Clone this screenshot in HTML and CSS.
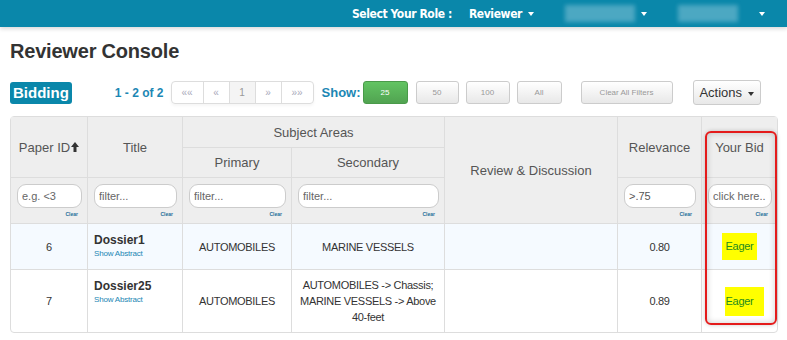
FILE: index.html
```html
<!DOCTYPE html>
<html lang="en">
<head>
    <meta charset="UTF-8">
    <title>Reviewer Console</title>
    <link rel="stylesheet" href="styles.css">
</head>
<body>
    <div class="topbar">
        <span class="role-label">Select Your Role :</span>
        <span class="nav-item role">Reviewer <span class="caret"></span></span>
        <span class="nav-item"><span class="blurred wide"></span><span class="caret"></span></span>
        <span class="nav-item"><span class="blurred"></span><span class="caret"></span></span>
    </div>

    <h1 class="page-title">Reviewer Console</h1>

    <div class="toolbar">
        <span class="badge">Bidding</span>
        <span class="count">1 - 2 of 2</span>
        <div class="pager">
            <span class="pg first">&laquo;&laquo;</span>
            <span class="pg">&laquo;</span>
            <span class="pg active">1</span>
            <span class="pg">&raquo;</span>
            <span class="pg first">&raquo;&raquo;</span>
        </div>
        <span class="show-label">Show:</span>
        <button class="btn green s25">25</button>
        <button class="btn s50">50</button>
        <button class="btn s100">100</button>
        <button class="btn sall">All</button>
        <button class="btn clear-all">Clear All Filters</button>
        <button class="btn actions">Actions <span class="caret dark"></span></button>
    </div>

    <div class="grid-wrap">
        <table class="grid">
            <colgroup>
                <col style="width:77px">
                <col style="width:95px">
                <col style="width:109px">
                <col style="width:153px">
                <col style="width:173px">
                <col style="width:84px">
                <col style="width:75px">
            </colgroup>
            <thead>
                <tr class="h1">
                    <th rowspan="2">Paper ID<svg class="sort" width="8" height="10" viewBox="0 0 8 10"><path d="M4 0 L8 5 H5.5 V10 H2.5 V5 H0 Z"/></svg></th>
                    <th rowspan="2">Title</th>
                    <th colspan="2">Subject Areas</th>
                    <th rowspan="3" class="review">Review &amp; Discussion</th>
                    <th rowspan="2">Relevance</th>
                    <th rowspan="2" class="last">Your Bid</th>
                </tr>
                <tr class="h2">
                    <th>Primary</th>
                    <th>Secondary</th>
                </tr>
                <tr class="filters">
                    <td><input class="filter" placeholder="e.g. <3"><div class="clear">Clear</div></td>
                    <td><input class="filter" placeholder="filter..."><div class="clear">Clear</div></td>
                    <td><input class="filter" placeholder="filter..."><div class="clear">Clear</div></td>
                    <td><input class="filter" placeholder="filter..."><div class="clear">Clear</div></td>
                    <td><input class="filter" value=">.75"><div class="clear">Clear</div></td>
                    <td class="last"><input class="filter" placeholder="click here.."><div class="clear">Clear</div></td>
                </tr>
            </thead>
            <tbody>
                <tr class="row odd">
                    <td>6</td>
                    <td class="title-cell"><div class="paper">Dossier1</div><a class="abstract">Show Abstract</a></td>
                    <td>AUTOMOBILES</td>
                    <td>MARINE VESSELS</td>
                    <td></td>
                    <td>0.80</td>
                    <td class="last"><span class="bid">Eager</span></td>
                </tr>
                <tr class="row tall">
                    <td>7</td>
                    <td class="title-cell"><div class="paper">Dossier25</div><a class="abstract">Show Abstract</a></td>
                    <td>AUTOMOBILES</td>
                    <td>AUTOMOBILES -&gt; Chassis; MARINE VESSELS -&gt; Above 40-feet</td>
                    <td></td>
                    <td>0.89</td>
                    <td class="last"><span class="bid big">Eager</span></td>
                </tr>
            </tbody>
        </table>
        <div class="bid-highlight"></div>
    </div>
</body>
</html>
```

FILE: styles.css
```css
body {
    margin: 0;
    font-family: 'Liberation Sans', Arial, sans-serif;
    color: #333;
    background: #fff;
}
.topbar {
    height: 27px;
    background: #0a87aa;
    box-shadow: 0 2px 4px rgba(0,0,0,0.15);
    display: flex;
    align-items: center;
    justify-content: flex-end;
    padding-right: 22px;
    color: #fff;
    font-family: 'DejaVu Sans Condensed', sans-serif;
    font-size: 12px;
    font-weight: bold;
    letter-spacing: -0.4px;
}
.nav-item {
    display: flex;
    align-items: center;
}
.role {
    margin-left: 17px;
    gap: 6px;
}
.nav-item + .nav-item {
    margin-left: 31px;
}
.blurred {
    display: inline-block;
    width: 60px;
    height: 17px;
    background: rgba(200,230,240,0.35);
    filter: blur(2px);
    margin-right: 21px;
}
.blurred.wide {
    width: 70px;
    margin-right: 6px;
}
.caret {
    display: inline-block;
    width: 0;
    height: 0;
    border-top: 4px solid #fff;
    border-left: 3px solid transparent;
    border-right: 3px solid transparent;
}
.caret.dark {
    border-top-color: #333;
    margin-left: 2px;
    vertical-align: middle;
}
.page-title {
    margin: 12px 0 0 10px;
    font-size: 20px;
    line-height: 24px;
    font-weight: bold;
    letter-spacing: -0.2px;
    color: #333;
}
.toolbar {
    display: flex;
    align-items: center;
    height: 25px;
    margin-top: 17px;
    padding-left: 10px;
}
.badge {
    background: #0a87aa;
    color: #fff;
    font-weight: bold;
    font-size: 15px;
    line-height: 22px;
    padding: 0 3px;
    border-radius: 3px;
}
.count, .show-label {
    color: #1c87b4;
    font-weight: bold;
    font-size: 12px;
}
.count {
    margin-left: 43px;
}
.pager {
    display: flex;
    margin-left: 7px;
    border: 1px solid #ddd;
    border-radius: 4px;
    overflow: hidden;
    height: 21px;
    box-shadow: 0 2px 3px rgba(0,0,0,0.04);
}
.pg {
    width: 25px;
    font-size: 10px;
    line-height: 21px;
    text-align: center;
    color: #aab;
    border-left: 1px solid #ddd;
}
.pg:first-child {
    border-left: none;
}
.pg.first {
    width: 31px;
}
.pg.active {
    background: #f4f4f4;
    color: #999;
}
.show-label {
    margin-left: 8px;
    font-size: 13px;
}
.btn {
    height: 23px;
    border: 1px solid #ccc;
    border-radius: 3px;
    background: linear-gradient(#fff, #e8e8e8);
    color: #999;
    font-family: 'Liberation Sans', Arial, sans-serif;
    font-size: 8px;
    padding: 0;
}
.btn.green {
    background: linear-gradient(#62c462, #51a351);
    border-color: #4a9a4a;
    color: #fff;
}
.s25 { width: 45px; margin-left: 2px; }
.s50 { width: 43px; margin-left: 8px; }
.s100 { width: 44px; margin-left: 7px; }
.sall { width: 45px; margin-left: 7px; }
.clear-all { width: 92px; margin-left: 19px; }
.actions {
    width: 68px;
    height: 25px;
    margin-left: 20px;
    font-size: 13px;
    color: #333;
}
.grid-wrap {
    position: relative;
    margin: 11px 9px 0 10px;
    border: 1px solid #ddd;
    border-radius: 4px;
    width: 766px;
}
.grid {
    border-collapse: separate;
    border-spacing: 0;
    table-layout: fixed;
    width: 766px;
}
.grid th, .grid td {
    border-right: 1px solid #ddd;
    border-bottom: 1px solid #ddd;
    padding: 0;
    box-sizing: border-box;
}
.grid tbody tr:last-child td {
    border-bottom: none;
}
.grid .last {
    border-right: none;
}
.grid th {
    background: #eee;
    color: #555;
    font-weight: normal;
    font-size: 13px;
    text-align: center;
}
.grid th.review {
    vertical-align: middle;
}
.h1 { height: 31px; }
.h2 { height: 30px; }
.sort {
    fill: #333;
    margin-left: 1px;
}
.filters td {
    background: #eee;
    height: 46px;
    vertical-align: top;
    padding: 6px 5px 0 6px;
}
.filter {
    display: block;
    width: 100%;
    box-sizing: border-box;
    height: 24px;
    border: 1px solid #ccc;
    border-radius: 9px;
    padding: 0 4px;
    font-family: 'Liberation Sans', Arial, sans-serif;
    font-size: 11px;
    color: #555;
    background: #fff;
}
.filter::placeholder {
    color: #666;
}
.clear {
    text-align: right;
    font-size: 5px;
    line-height: 6px;
    font-weight: bold;
    color: #1c6f99;
    margin: 3px 4px 0 0;
}
.row td {
    font-size: 11px;
    letter-spacing: -0.3px;
    line-height: 16px;
    text-align: center;
    vertical-align: middle;
    padding: 0 6px;
}
.row.odd td {
    background: #f5faff;
    height: 46px;
}
.row.tall td {
    height: 62px;
}
.row .title-cell {
    text-align: left;
    vertical-align: top;
    padding-top: 8px;
    letter-spacing: 0;
}
.paper {
    font-weight: bold;
    font-size: 12px;
}
.abstract {
    display: block;
    font-size: 8px;
    line-height: 11px;
    letter-spacing: -0.2px;
    color: #1c87b4;
}
.bid {
    display: inline-block;
    background: #ff0;
    color: #1e8c1e;
    padding: 6px 4px;
    line-height: 15px;
}
.bid.big {
    padding: 7px 11px 7px 1px;
    margin-left: 10px;
}
.bid-highlight {
    position: absolute;
    left: 694px;
    top: 14px;
    width: 68px;
    height: 190px;
    border: 2px solid #e41b1b;
    border-radius: 6px;
    box-shadow: inset 0 0 6px rgba(0,0,0,0.2), 0 0 4px rgba(0,0,0,0.2);
}
```
